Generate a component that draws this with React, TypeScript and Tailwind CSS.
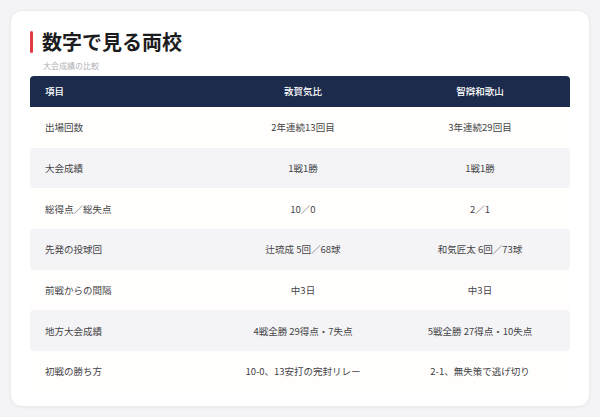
const rows = [
  { label: "出場回数", a: "2年連続13回目", b: "3年連続29回目" },
  { label: "大会成績", a: "1戦1勝", b: "1戦1勝" },
  { label: "総得点／総失点", a: "10／0", b: "2／1" },
  { label: "先発の投球回", a: "辻琉成 5回／68球", b: "和気匠太 6回／73球" },
  { label: "前戦からの間隔", a: "中3日", b: "中3日" },
  { label: "地方大会成績", a: "4戦全勝 29得点・7失点", b: "5戦全勝 27得点・10失点" },
  { label: "初戦の勝ち方", a: "10-0、13安打の完封リレー", b: "2-1、無失策で逃げ切り" },
];

export default function App() {
  return (
    <div
      className="min-h-[417px] w-[600px] bg-[#f4f4f6] p-[10px]"
      style={{ fontFamily: '"Noto Sans CJK JP", "Noto Sans", sans-serif' }}
    >
      <div className="rounded-xl border border-[#ececef] bg-white px-[19px] pt-[17px] pb-[14px] shadow-[0_1px_3px_rgba(0,0,0,0.04)]">
        <div className="flex items-center gap-[9px]">
          <span className="h-[22px] w-[3px] rounded-full bg-[#e03a44]" />
          <h1 className="text-[20px] leading-[28px] font-bold text-[#1c1c1e]">
            数字で見る両校
          </h1>
        </div>
        <p className="mt-[4px] pl-[13px] text-[8px] leading-[12px] text-[#b0b0b5]">
          大会成績の比較
        </p>

        <div className="mt-[4px]">
          <div className="grid h-[31px] grid-cols-[186px_174px_180px] items-center rounded-t-[4px] bg-[#1c2a4c] text-[9.5px] font-medium text-white">
            <div className="pl-[15px]">項目</div>
            <div className="text-center">敦賀気比</div>
            <div className="text-center">智辯和歌山</div>
          </div>

          {rows.map((row, i) => (
            <div
              key={row.label}
              className={`grid h-[40.7px] grid-cols-[186px_174px_180px] items-center text-[9.5px] text-[#444447] ${
                i % 2 === 1 ? "rounded-[4px] bg-[#f4f4f6]" : "bg-[#fffefd]"
              }`}
            >
              <div className="pl-[15px]">{row.label}</div>
              <div className="text-center">{row.a}</div>
              <div className="text-center">{row.b}</div>
            </div>
          ))}
        </div>
      </div>
    </div>
  );
}
